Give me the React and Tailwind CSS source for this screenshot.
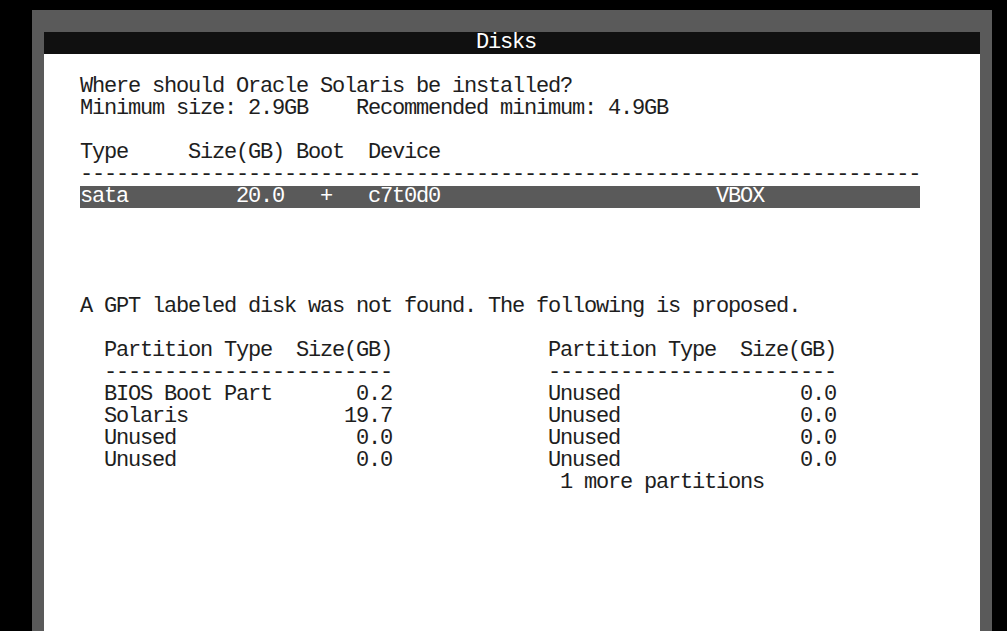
import React from "react";

const mono = { fontFamily: '"Liberation Mono", monospace' };

function Line({ children, className = "" }) {
  return <div className={`h-[22px] leading-[22px] whitespace-pre ${className}`}>{children}</div>;
}

function PartTable({ rows, extra }) {
  return (
    <div className="w-[288px] flex flex-col">
      <Line>Partition Type  Size(GB)</Line>
      <Line>{"-".repeat(24)}</Line>
      {rows.map(([name, size], i) => (
        <div key={i} className="h-[22px] leading-[22px] flex justify-between whitespace-pre">
          <span>{name}</span>
          <span>{size}</span>
        </div>
      ))}
      {extra && <Line className="pl-[12px]">{extra}</Line>}
    </div>
  );
}

export default function App() {
  return (
    <div
      className="w-[1007px] h-[631px] bg-black overflow-hidden pt-[10px] pl-[32px] text-[22px] tracking-[-1.2px]"
      style={mono}
    >
      <div className="w-[960px] h-[640px] bg-[#5a5a5a] pt-[22px] px-[12px]">
        <div className="h-[22px] leading-[22px] bg-[#101010] text-white pl-[432px]">Disks</div>
        <div className="h-[600px] bg-white text-[#1e1e1e] pl-[36px] pt-[22px]">
          <Line>Where should Oracle Solaris be installed?</Line>
          <Line>Minimum size: 2.9GB    Recommended minimum: 4.9GB</Line>
          <Line />
          <Line>Type     Size(GB) Boot  Device</Line>
          <Line>{"-".repeat(70)}</Line>
          <Line className="w-[840px] bg-[#5a5a5a] text-white">
            {"sata         20.0   +   c7t0d0                       VBOX"}
          </Line>
          <Line />
          <Line />
          <Line />
          <Line />
          <Line>A GPT labeled disk was not found. The following is proposed.</Line>
          <Line />
          <div className="flex pl-[24px] gap-[156px]">
            <PartTable
              rows={[
                ["BIOS Boot Part", "0.2"],
                ["Solaris", "19.7"],
                ["Unused", "0.0"],
                ["Unused", "0.0"],
              ]}
            />
            <PartTable
              rows={[
                ["Unused", "0.0"],
                ["Unused", "0.0"],
                ["Unused", "0.0"],
                ["Unused", "0.0"],
              ]}
              extra="1 more partitions"
            />
          </div>
        </div>
      </div>
    </div>
  );
}
